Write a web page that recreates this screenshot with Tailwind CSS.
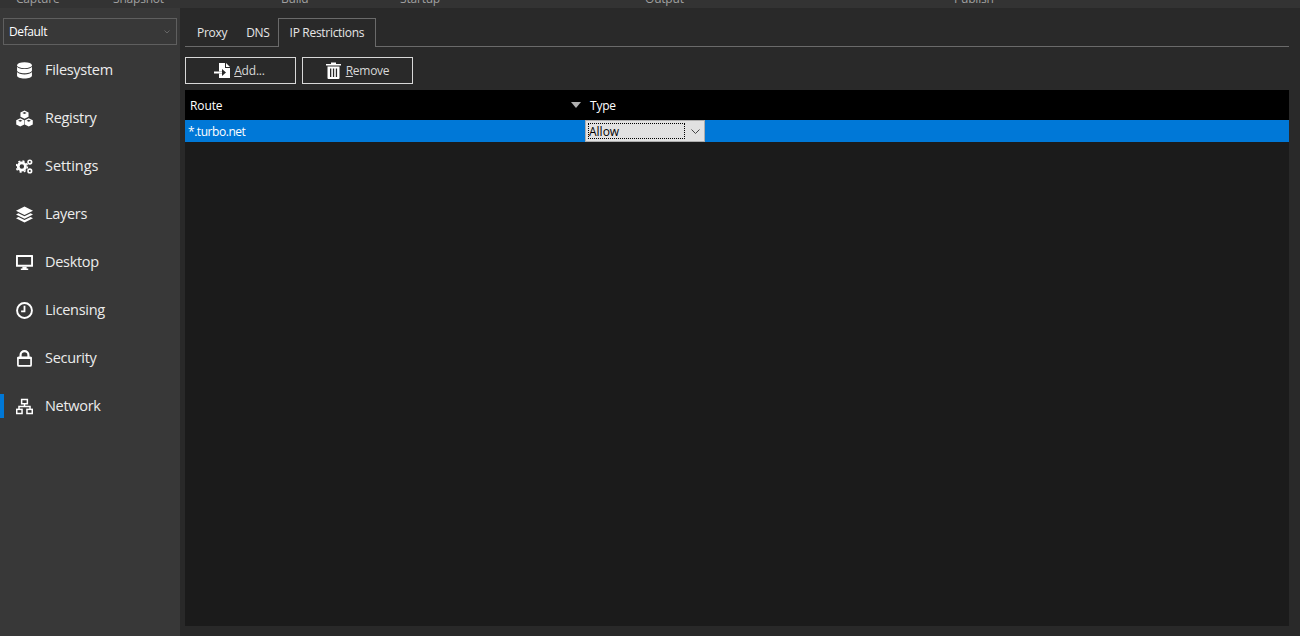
<!doctype html>
<html lang="en">
<head>
<meta charset="utf-8">
<title>Network</title>
<script src="https://cdn.jsdelivr.net/npm/@tailwindcss/browser@4"></script>
</head>
<body class="bg-[#292929] font-['Open_Sans','Noto_Sans',sans-serif] text-white overflow-hidden">
<div class="w-[1300px] h-[636px] flex flex-col overflow-hidden">
    <!-- top tabs, cut off by the window -->
    <div class="h-2 bg-[#333333] overflow-hidden flex text-[12px] tracking-[-0.2px] leading-[16px] text-[#a0a0a0] shrink-0">
        <span class="-mt-[9px] ml-[16px] w-[97px]">Capture</span>
        <span class="-mt-[9px] w-[168px]">Snapshot</span>
        <span class="-mt-[9px] w-[119px]">Build</span>
        <span class="-mt-[9px] w-[245px]">Startup</span>
        <span class="-mt-[9px] w-[309px]">Output</span>
        <span class="-mt-[9px]">Publish</span>
    </div>
    <div class="flex flex-1 min-h-0">
        <aside class="w-[180px] bg-[#383838] shrink-0 pt-[10px] px-0">
            <div class="mx-[3px] h-[27px] w-[174px] border border-[#5f5f5f] flex items-center justify-between pl-[5px] pr-[6px] text-[12px] tracking-[-0.4px]">
                <span>Default</span>
                <svg width="6" height="4" viewBox="0 0 6 4" fill="none" stroke="#666666" stroke-width="1"><path d="M.5.5 3 3 5.500.5"/></svg>
            </div>
            <nav class="mt-[1px] text-[14.5px] tracking-[-0.3px] text-[#ececec]">
                <div class="h-12 flex items-center gap-[12px] pl-[16px]">
                    <svg class="w-[17px] h-[17px]" viewBox="0 0 16 16" fill="#fff"><ellipse cx="8" cy="3" rx="7" ry="2.800"/><path d="M1 4.500c1 1.400 3.800 2.200 7 2.200s6-.8 7-2.200V8c0 1.400-3.100 2.600-7 2.600S1 9.400 1 8z"/><path d="M1 9.500c1 1.400 3.800 2.200 7 2.200s6-.8 7-2.200V13c0 1.400-3.100 2.600-7 2.600S1 14.400 1 13z"/></svg>
                    <span>Filesystem</span>
                </div>
                <div class="h-12 flex items-center gap-[12px] pl-[16px]">
                    <svg class="w-[17px] h-[17px]" viewBox="0 0 16 16" fill="#fff"><path d="M8 .5 11.800 2.300V6.300L8 8.200 4.200 6.300V2.300z"/><path d="M4 7.800 7.800 9.600V13.600L4 15.500 .2 13.600V9.600z"/><path d="M12 7.800 15.800 9.600V13.600L12 15.500 8.200 13.600V9.600z"/><path d="M8 1.800 10 2.800 8 3.800 6 2.800zM4 9.100 6 10.100 4 11.100 2 10.100zM12 9.100 14 10.100 12 11.100 10 10.100z" fill="#383838"/></svg>
                    <span>Registry</span>
                </div>
                <div class="h-12 flex items-center gap-[12px] pl-[16px]">
                    <svg class="w-[17px] h-[17px]" viewBox="0 0 16 16"><circle cx="5.500" cy="8" r="3.400" fill="none" stroke="#fff" stroke-width="2.600"/><circle cx="5.500" cy="8" r="5.200" fill="none" stroke="#fff" stroke-width="1.500" stroke-dasharray="2 2.080"/><circle cx="13" cy="3.800" r="1.700" fill="none" stroke="#fff" stroke-width="1.500"/><circle cx="13" cy="12.200" r="1.700" fill="none" stroke="#fff" stroke-width="1.500"/></svg>
                    <span class="tracking-[-0.05px]">Settings</span>
                </div>
                <div class="h-12 flex items-center gap-[12px] pl-[16px]">
                    <svg class="w-[17px] h-[17px]" viewBox="0 0 16 16" fill="#fff"><path d="M8 .5 16 4.500 8 8.500 0 4.500z"/><path d="M2.300 6.800 8 9.700l5.700-2.900L16 8l-8 4-8-4z"/><path d="M2.300 10.300 8 13.200l5.700-2.900 2.300 1.200-8 4-8-4z"/></svg>
                    <span>Layers</span>
                </div>
                <div class="h-12 flex items-center gap-[12px] pl-[16px]">
                    <svg class="w-[17px] h-[17px]" viewBox="0 0 16 16" fill="#fff"><path fill-rule="evenodd" d="M.5 1h15a.5.5 0 0 1 .5.5v10a.5.5 0 0 1-.5.5H.5a.5.5 0 0 1-.5-.5v-10A.5.5 0 0 1 .5 1zM1.800 2.800v7.400h12.400V2.800z"/><path d="M6 12h4v1.700h1.500V15h-7v-1.300H6z"/></svg>
                    <span>Desktop</span>
                </div>
                <div class="h-12 flex items-center gap-[12px] pl-[16px]">
                    <svg class="w-[17px] h-[17px]" viewBox="0 0 16 16" fill="none" stroke="#fff"><circle cx="8" cy="8" r="7" stroke-width="1.800"/><path d="M8 3.500V8.800H4.800" stroke-width="1.700"/></svg>
                    <span>Licensing</span>
                </div>
                <div class="h-12 flex items-center gap-[12px] pl-[16px]">
                    <svg class="w-[17px] h-[17px]" viewBox="0 0 16 16" fill="none" stroke="#fff"><path d="M4.300 7V4.800a3.700 3.700 0 0 1 7.400 0V7" stroke-width="2"/><rect x="1.800" y="7" width="12.400" height="8" rx="1" stroke-width="1.600"/><path d="M1.200 7.500h13.600" stroke-width="2"/></svg>
                    <span>Security</span>
                </div>
                <div class="h-12 flex items-center gap-[12px] pl-[16px] relative">
                    <div class="absolute left-0 top-[12px] w-1 h-6 bg-[#0078d7]"></div>
                    <svg class="w-[17px] h-[17px]" viewBox="0 0 16 16" fill="none" stroke="#fff" stroke-width="1.400"><rect x="5.300" y="1.400" width="5.400" height="4"/><path d="M8 5.500V8M2.800 10.500V8h10.400v2.500"/><rect x=".7" y="10.700" width="5" height="3.900"/><rect x="10.300" y="10.700" width="5" height="3.900"/></svg>
                    <span>Network</span>
                </div>
            </nav>
        </aside>
        <main class="flex-1 min-w-0 pl-[5px] pr-[11px] pt-[10px] pb-[10px] flex flex-col text-[12px]">
            <div class="flex h-[29px] border-b border-[#6a6a6a] shrink-0 items-stretch tracking-[-0.3px]">
                <div class="pl-[12px] pr-[10px] pt-[6px] text-[#e6e6e6]">Proxy</div>
                <div class="pl-[9px] pr-[8px] pt-[6px] text-[#e6e6e6]">DNS</div>
                <div class="px-[11px] pt-[5px] h-[29px] border border-b-0 border-[#6a6a6a] bg-[#292929] text-[#e6e6e6]">IP Restrictions</div>
            </div>
            <div class="flex gap-[6px] mt-[10px] shrink-0">
                <button class="w-[111px] h-[27px] border border-[#d8d8d8] flex items-center justify-center gap-[3px] text-[#d8d8d8] tracking-[-0.2px]">
                    <svg class="w-[17px] h-[17px] -ml-[2px]" viewBox="0 0 17 17" fill="#fff"><path d="M5 1h6v5h5v10H5v-4.500h3V14l4-3.500L8 7v2.500H5z"/><path d="M12 1l4 4h-4z"/><path d="M0 9.500h8v2H0z"/></svg>
                    <span><span class="underline">A</span>dd...</span>
                </button>
                <button class="w-[111px] h-[27px] border border-[#d8d8d8] flex items-center justify-center gap-[5px] text-[#d8d8d8] tracking-[-0.25px]">
                    <svg class="w-[15px] h-[17px]" viewBox="0 0 15 17" fill="#fff"><path d="M0 2h5V.5h5V2h5v1.500H0z"/><path fill-rule="evenodd" d="M1.500 4.500h12V16a1 1 0 0 1-1 1h-10a1 1 0 0 1-1-1zM4 6.500v8.500h1.300V6.500zM6.900 6.500v8.500h1.300V6.500zM9.800 6.500v8.500h1.300V6.500z"/></svg>
                    <span><span class="underline">R</span>emove</span>
                </button>
            </div>
            <div class="mt-[6px] flex-1 min-h-0 bg-[#1b1b1b] flex flex-col">
                <div class="h-[30px] bg-black flex items-center shrink-0 pt-[2px]">
                    <span class="w-[381px] pl-[5px] tracking-[-0.1px]">Route</span>
                    <svg class="w-[10px] h-[6px] -mt-[2px] ml-[5px]" viewBox="0 0 10 6" fill="#b0b0b0"><path d="M0 0h10L5 6z"/></svg>
                    <span class="ml-[9px] tracking-[-0.2px]">Type</span>
                </div>
                <div class="h-[22px] bg-[#0078d7] flex shrink-0">
                    <span class="w-[400px] pl-[3px] leading-[24px] tracking-[-0.45px]">*.turbo.net</span>
                    <div class="w-[120px] h-[22px] bg-[#e1e1e1] border border-[#adadad] flex items-center text-black">
                        <span class="ml-[2px] w-[97px] h-[16px] leading-[17px] pl-px outline-1 outline-dotted outline-black -outline-offset-1">Allow</span>
                        <svg class="ml-[6px]" width="9" height="5" viewBox="0 0 9 5" fill="none" stroke="#444" stroke-width="1"><path d="M.5.5 4.500 4.500 8.500.5"/></svg>
                    </div>
                </div>
            </div>
        </main>
    </div>
</div>
</body>
</html>
